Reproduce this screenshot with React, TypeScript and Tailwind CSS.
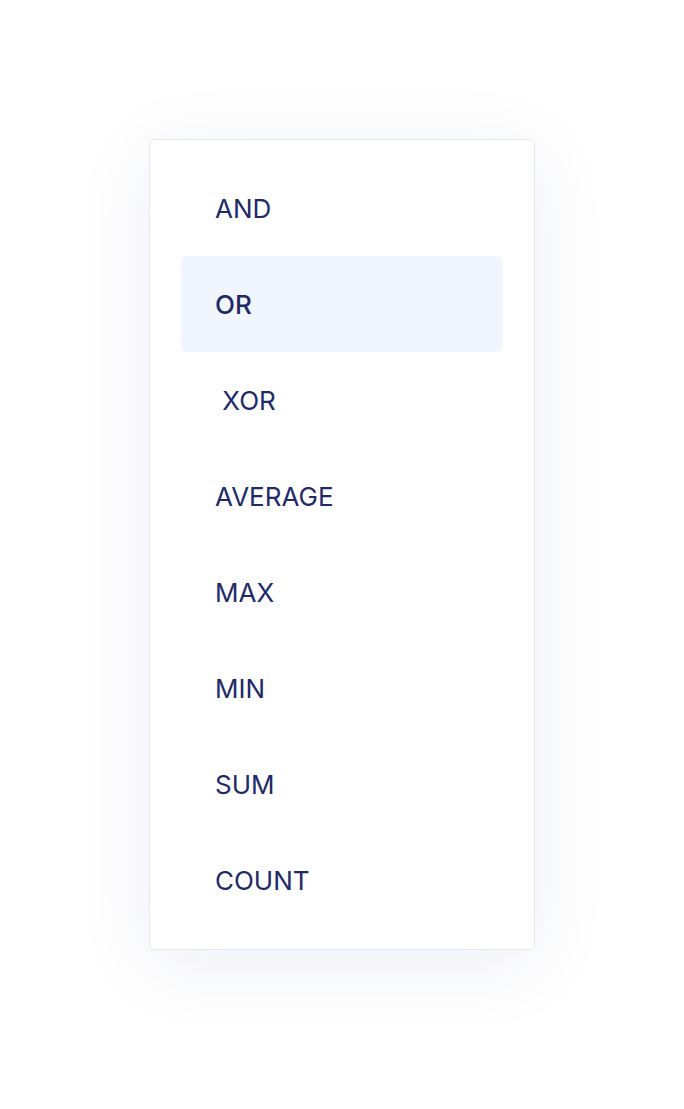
import React from 'react';

const options = [' XOR', 'AVERAGE', 'MAX', 'MIN', 'SUM', 'COUNT'];

const Item: React.FC<{ label: string; active?: boolean }> = ({ label, active }) => (
    <div
        className={`h-[96px] flex items-center pl-[34px] rounded-[5px] whitespace-pre text-[26px] text-[#1f2a69] ${
            active ? 'bg-[#f1f5fd] font-medium' : 'font-normal'
        }`}
    >
        {label}
    </div>
);

export default function App() {
    return (
        <div
            className="w-[684px] h-[1109px] bg-white flex justify-center pt-[139px]"
            style={{ fontFamily: 'Inter, "Noto Sans", sans-serif' }}
        >
            <div className="w-[386px] h-[811px] bg-white border border-[#e6e8f0] rounded-[5px] px-[31px] py-[20px] shadow-[0_14px_80px_rgba(40,50,120,0.08)]">
                <Item label="AND" />
                <Item label="OR" active />
                {options.map(o => (
                    <Item key={o} label={o} />
                ))}
            </div>
        </div>
    );
}
